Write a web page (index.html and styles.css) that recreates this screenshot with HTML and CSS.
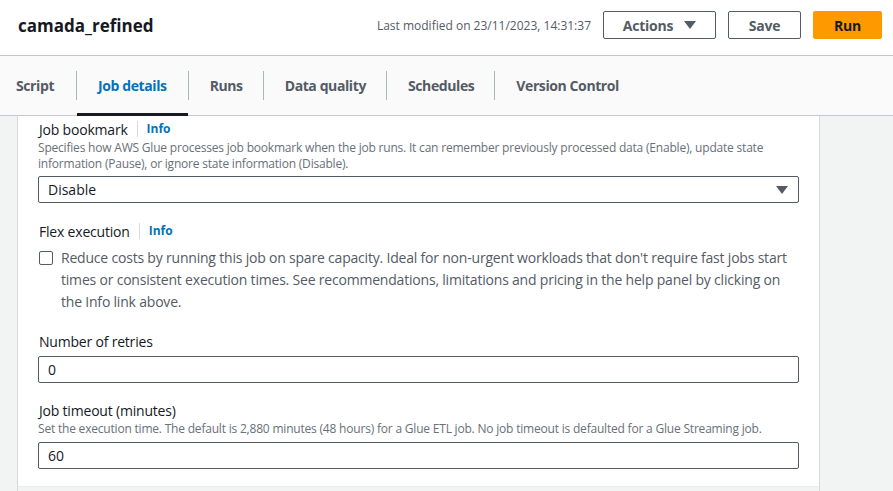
FILE: index.html
```html
<!DOCTYPE html>
<html>
<head>
<meta charset="utf-8">
<link rel="stylesheet" href="styles.css">
</head>
<body>
<header class="topbar">
  <h1 class="title">camada_refined</h1>
  <div class="top-actions">
    <span class="modified">Last modified on 23/11/2023, 14:31:37</span>
    <button class="btn btn-actions">Actions <span class="caret"></span></button>
    <button class="btn btn-save">Save</button>
    <button class="btn btn-run">Run</button>
  </div>
</header>
<nav class="tabs">
  <div class="tab">Script</div>
  <div class="tab active">Job details</div>
  <div class="tab">Runs</div>
  <div class="tab">Data quality</div>
  <div class="tab">Schedules</div>
  <div class="tab last">Version Control</div>
</nav>
<main class="body">
  <div class="side-left"></div>
  <section class="panel">
    <div class="field">
      <div class="label-row"><span class="label">Job bookmark</span><span class="info">Info</span></div>
      <div class="desc">Specifies how AWS Glue processes job bookmark when the job runs. It can remember previously processed data (Enable), update state information (Pause), or ignore state information (Disable).</div>
      <div class="select"><span>Disable</span><span class="select-caret"></span></div>
    </div>
    <div class="field flex">
      <div class="label-row"><span class="label">Flex execution</span><span class="info">Info</span></div>
      <div class="check-row">
        <span class="checkbox"></span>
        <span class="check-text">Reduce costs by running this job on spare capacity. Ideal for non-urgent workloads that don't require fast jobs start times or consistent execution times. See recommendations, limitations and pricing in the help panel by clicking on the Info link above.</span>
      </div>
    </div>
    <div class="field retries">
      <div class="label-row"><span class="label">Number of retries</span></div>
      <div class="input">0</div>
    </div>
    <div class="field timeout">
      <div class="label-row"><span class="label">Job timeout (minutes)</span></div>
      <div class="desc">Set the execution time. The default is 2,880 minutes (48 hours) for a Glue ETL job. No job timeout is defaulted for a Glue Streaming job.</div>
      <div class="input">60</div>
    </div>
  </section>
  <div class="side-right"></div>
</main>
</body>
</html>
```
FILE: styles.css
```css
* { box-sizing: border-box; }
html, body { margin: 0; padding: 0; }
body {
  width: 893px;
  height: 491px;
  overflow: hidden;
  font-family: "Open Sans", "Liberation Sans", sans-serif;
  color: #16191f;
  background: #f2f3f3;
}
.topbar {
  height: 56px;
  background: #fff;
  border-bottom: 1px solid #c6c6cd;
  display: flex;
  align-items: center;
  justify-content: space-between;
  padding: 0 11px 0 18px;
}
.title {
  margin: 0;
  font-size: 17px;
  font-weight: 700;
  margin-top: -5px;
}
.top-actions {
  display: flex;
  align-items: center;
  margin-top: -5px;
}
.modified {
  font-size: 12px;
  color: #545b64;
  margin-right: 12px;
}
.btn {
  font-family: inherit;
  font-size: 14px;
  font-weight: 700;
  letter-spacing: -0.2px;
  height: 28px;
  border-radius: 2px;
  background: #fff;
  border: 1px solid #545b64;
  color: #545b64;
  padding: 0;
  display: flex;
  align-items: center;
  justify-content: center;
}
.btn-actions { width: 113px; margin-right: 12px; gap: 11px; }
.caret {
  width: 0; height: 0;
  border-left: 6px solid transparent;
  border-right: 6px solid transparent;
  border-top: 8px solid #545b64;
  display: inline-block;
}
.btn-save { width: 73px; margin-right: 12px; }
.btn-run { width: 69px; background: #ff9900; border-color: #ff9900; color: #16191f; }
.tabs {
  height: 60px;
  background: #fafafa;
  border-bottom: 1px solid #c6c6cd;
  display: flex;
  align-items: stretch;
}
.tab {
  font-size: 14px;
  font-weight: 700;
  letter-spacing: -0.4px;
  color: #545b64;
  display: flex;
  align-items: center;
  padding: 0 20px 0 21px;
  position: relative;
  border-right: 1px solid #aab7b8;
  margin: 15px 0;
}
.tab:first-child { padding-left: 16px; padding-right: 22px; }
.tab.active { padding-right: 21px; }
.tab.last { border-right: none; }
.tab.active { color: #0073bb; }
.tab.active::after {
  content: "";
  position: absolute;
  left: 0; right: 0;
  bottom: -16px;
  height: 3px;
  background: #16191f;
}
.body {
  display: flex;
  height: 375px;
}
.side-left { width: 18px; border-right: 1px solid #d5dbdb; background: #f2f3f3; }
.side-right { flex: 1; border-left: 1px solid #d5dbdb; background: #f2f3f3; }
.panel {
  width: 801px;
  background: #fff;
  padding: 3px 20px 0 20px;
  border-bottom: 1px solid #eaeded;
  height: 371px;
}
.label-row {
  display: flex;
  align-items: center;
  height: 20px;
  padding-left: 1px;
}
.label { font-size: 14px; color: #16191f; letter-spacing: -0.2px; }
.info {
  font-size: 12px;
  font-weight: 700;
  color: #0073bb;
  border-left: 1px solid #d5dbdb;
  margin-left: 9px;
  padding-left: 9px;
  line-height: 16px;
}
.desc {
  font-size: 12px;
  line-height: 16px;
  color: #687078;
  margin-top: 1px;
  letter-spacing: -0.2px;
}
.select, .input {
  height: 27px;
  border: 1px solid #545b64;
  border-radius: 2px;
  font-size: 14px;
  padding: 0 9px;
  display: flex;
  align-items: center;
  justify-content: space-between;
  margin-top: 4px;
}
.select-caret {
  width: 0; height: 0;
  border-left: 6px solid transparent;
  border-right: 6px solid transparent;
  border-top: 8px solid #545b64;
  margin-right: 1px;
}
.flex { margin-top: 18px; }
.check-row { display: flex; margin-top: 6px; }
.checkbox {
  width: 14px; height: 14px;
  border: 1px solid #545b64;
  border-radius: 2px;
  flex: none;
  margin: 4px 8px 0 1px;
}
.check-text {
  font-size: 14px;
  line-height: 22px;
  color: #545b64;
  letter-spacing: -0.2px;
}
.retries { margin-top: 18px; }
.retries .input { margin-top: 5px; }
.timeout { margin-top: 17px; }
.timeout .desc { margin-top: 1px; }
.timeout .input { margin-top: 5px; }
```
